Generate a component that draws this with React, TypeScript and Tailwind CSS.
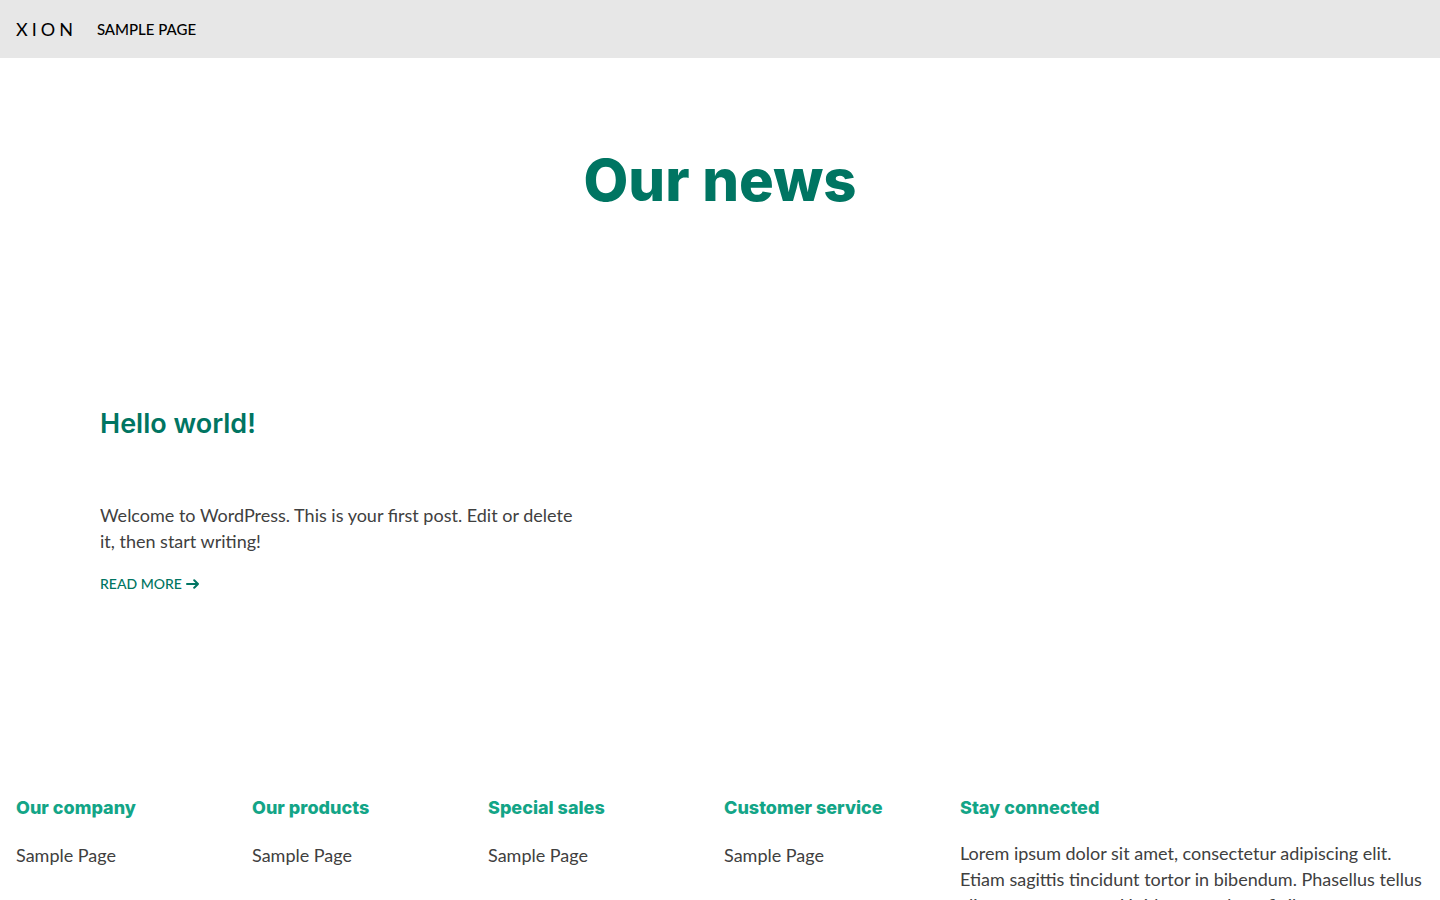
const linkColumns = ["Our company", "Our products", "Special sales", "Customer service"];

function Header() {
  return (
    <header className="flex h-[58px] items-center gap-5 bg-[#e7e7e7] px-4 text-black">
      <a href="#" className="text-lg tracking-[4px]">
        XION
      </a>
      <nav>
        <a href="#" className="block text-[15px] leading-5 font-medium uppercase">
          Sample Page
        </a>
      </nav>
    </header>
  );
}

function ArrowRight() {
  return (
    <svg width="13" height="10" viewBox="0 0 13 10" fill="none" stroke="currentColor" strokeWidth="2" strokeLinecap="round" strokeLinejoin="round" aria-hidden="true">
      <path d="M1 5h11M8.2 1.2 12 5 8.2 8.8" />
    </svg>
  );
}

function Post() {
  return (
    <article>
      <h2 className="font-['Inter',sans-serif] text-[27px] leading-8 font-semibold text-[#007562]">Hello world!</h2>
      <p className="mt-[62px] text-lg leading-[26px]">
        Welcome to WordPress. This is your first post. Edit or delete it, then start writing!
      </p>
      <a href="#" className="mt-5 inline-flex items-center gap-1 text-sm font-medium text-[#007562] uppercase">
        Read more
        <ArrowRight />
      </a>
    </article>
  );
}

function FooterTitle({ children }: { children: string }) {
  return <h3 className="font-['Inter',sans-serif] text-lg leading-6 font-extrabold text-[#13a587]">{children}</h3>;
}

function Footer() {
  return (
    <footer className="grid grid-cols-6 gap-2 px-4 pb-16">
      {linkColumns.map((title) => (
        <div key={title}>
          <FooterTitle>{title}</FooterTitle>
          <ul className="mt-[22px]">
            <li>
              <a href="#" className="block text-lg leading-[26px]">
                Sample Page
              </a>
            </li>
          </ul>
        </div>
      ))}
      <div className="col-span-2">
        <FooterTitle>Stay connected</FooterTitle>
        <p className="mt-5 text-lg leading-[26px]">
          Lorem ipsum dolor sit amet, consectetur adipiscing elit. Etiam sagittis tincidunt tortor in bibendum. Phasellus tellus
          aliquet consectetur. Ut id commodo ut finibus.
        </p>
      </div>
    </footer>
  );
}

export default function App() {
  return (
    <div className="min-h-screen bg-white font-['Lato',sans-serif] text-[#404040]">
      <Header />
      <main>
        <h1 className="mt-20 text-center font-['Inter',sans-serif] text-[58px] leading-[84px] font-extrabold text-[#007562]">
          Our news
        </h1>
        <section className="mx-auto mt-[186px] mb-[201px] grid max-w-[1240px] grid-cols-2 gap-72">
          <Post />
        </section>
      </main>
      <Footer />
    </div>
  );
}
